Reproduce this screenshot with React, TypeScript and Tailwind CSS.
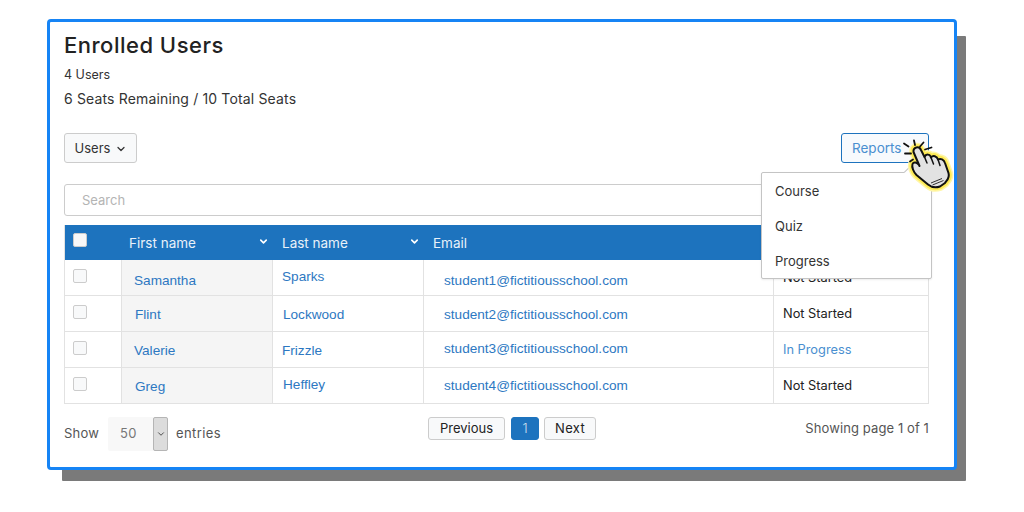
import * as React from "react";
import { ChevronDown } from "lucide-react";

const rows = [
  { first: "Samantha", last: "Sparks", email: "student1@fictitiousschool.com", status: "Not Started", firstPad: "pl-[12px] pt-[8px]", lastPad: "pl-[9px] pb-[1px]", emailPad: "pt-[7px]" },
  { first: "Flint", last: "Lockwood", email: "student2@fictitiousschool.com", status: "Not Started", firstPad: "pl-[13px] pt-[4px]", lastPad: "pl-[10px] pt-[4px]", emailPad: "pt-[4px]" },
  { first: "Valerie", last: "Frizzle", email: "student3@fictitiousschool.com", status: "In Progress", firstPad: "pl-[12px] pt-[4px]", lastPad: "pl-[9px] pt-[4px]", emailPad: "" },
  { first: "Greg", last: "Heffley", email: "student4@fictitiousschool.com", status: "Not Started", firstPad: "pl-[13px] pt-[4px]", lastPad: "pl-[10px] pb-[1px]", emailPad: "pt-[1px]" },
];

const handOutline =
  "M23.500 22 C23 17 29 15.500 31 20 L34.500 27 C36 23.500 40 24 41 27.500 C43 25 47 26 48 29.500 C50.500 28 54 29.500 55 33 L58.500 43 C60 48 57 50 55 53 L50 56.500 C45.500 58 41 57 38 54.500 L26.500 45 C23.500 42 21.500 37 22.500 34 C23.500 31.500 27 32 29 35 L29.500 36 Z";

const HandCursor = () => (
  <svg className="absolute left-[840px] top-[108px] pointer-events-none" width="70" height="65" viewBox="0 0 70 65">
    <path d={handOutline} fill="#fff6a8" stroke="#fff6a8" strokeWidth="9" strokeLinejoin="round" />
    <path d={handOutline} fill="#fdf07a" stroke="#fdea55" strokeWidth="6" strokeLinejoin="round" />
    <g stroke="#111" strokeWidth="1.800" strokeLinecap="round">
      <path d="M14 13.500 L18.500 16.500" />
      <path d="M24 10.500 L25 15" />
      <path d="M33.500 12.500 L30 16.500" />
      <path d="M35 19.500 L41.500 17.500" />
      <path d="M15 23.500 L21 23.500" />
      <path d="M20 31.500 L23 29.500" />
    </g>
    <path d={handOutline} fill="#e2e2e2" stroke="#111" strokeWidth="2" strokeLinejoin="round" />
    <path d="M34.500 27 L37 33 M41 27.500 L43.500 34 M48 29.500 L50 35.500" stroke="#111" strokeWidth="1.500" strokeLinecap="round" fill="none" />
    <path d="M41 53 L52 48.500 M42.500 55 L53.500 50.500" stroke="#333" strokeWidth="1" fill="none" />
  </svg>
);

export default function App() {
  return (
    <div className="h-[512px] w-[1024px] overflow-hidden bg-white pl-[47px] pt-[19px] font-['Inter',sans-serif] text-[#333]">
      <div className="relative h-[451px] w-[910px] rounded-[4px] border-[3px] border-[#1684f5] bg-white pr-[15px] pl-[14px] pt-[9px] shadow-[12px_14px_0_-3px_#7a7a7a]">
        <h2 className="text-[22px] leading-[28px] font-medium tracking-[0.5px] text-[#222]">Enrolled Users</h2>
        <p className="mt-[7px] text-[12.500px] leading-[18px]">4 Users</p>
        <p className="mt-[6px] text-[14px] leading-[18px] tracking-[0.15px]">6 Seats Remaining / 10 Total Seats</p>

        <div className="mt-[25px] flex items-start justify-between pr-[10px]">
          <button className="flex h-[30px] w-[73px] items-center justify-center gap-[5px] rounded-[3px] border border-[#ccc] bg-[#f8f9fa] pt-[1px] pl-[1px] text-[13px]">
            Users
            <ChevronDown size={12} strokeWidth={2.5} />
          </button>
          <button className="h-[30px] w-[88px] rounded-[3px] border border-[#1d73be] bg-[#f7fafd] pt-[1px] pl-[10px] text-left text-[13.500px] text-[#4a8fd0]">
            Reports
          </button>
        </div>

        <div className="mt-[21px] mr-[10px] flex h-[32px] items-center rounded-[3px] border border-[#ccc] pt-[1px] pl-[17px] text-[13px] text-[#b4b4b4]">
          Search
        </div>

        <div className="mt-[9px] mr-[10px] border border-t-0 border-[#e2e2e2]">
          <div className="grid h-[35px] grid-cols-[56px_151px_151px_350px_1fr] items-center bg-[#1d73be] pt-[1px] text-[13.500px] text-[#e9f1f9]">
            <div className="pb-[6px] pl-[8px]">
              <div className="h-[14px] w-[14px] rounded-[2px] border border-[#ccc] bg-[#f8f8f8]" />
            </div>
            <div className="flex items-center justify-between pr-[3px] pl-[8px]">
              First name
              <ChevronDown size={11} strokeWidth={3.5} className="mb-[3px] text-white" />
            </div>
            <div className="flex items-center justify-between pr-[3px] pl-[10px]">
              Last name
              <ChevronDown size={11} strokeWidth={3.5} className="mb-[3px] text-white" />
            </div>
            <div className="pl-[10px]">Email</div>
            <div />
          </div>
          {rows.map((row, i) => (
            <div
              key={i}
              className={`grid grid-cols-[56px_151px_151px_350px_1fr] font-['Liberation_Sans',sans-serif] text-[13.600px] text-[#2d78c2] ${i === 0 ? "h-[35px]" : "h-[36px] border-t border-[#e2e2e2]"}`}
            >
              <div className="flex items-center pb-[4px] pl-[8px]">
                <div className="h-[14px] w-[14px] rounded-[2px] border border-[#ccc] bg-[#f8f9fa]" />
              </div>
              <div className={`flex items-center border-l border-[#e2e2e2] bg-[#f5f5f5] ${row.firstPad}`}>{row.first}</div>
              <div className={`flex items-center border-l border-[#e2e2e2] ${row.lastPad}`}>{row.last}</div>
              <div className={`flex items-center border-l border-[#e2e2e2] pl-[20px] ${row.emailPad}`}>{row.email}</div>
              <div
                className={`flex items-center border-l border-[#e2e2e2] pl-[9px] font-['Inter',sans-serif] text-[12.800px] ${row.status === "In Progress" ? "text-[#4a8fd0]" : "text-[#222]"}`}
              >
                {row.status}
              </div>
            </div>
          ))}
        </div>

        <div className="mt-[13px] mr-[10px] grid grid-cols-[364px_1fr_auto] items-start">
          <div className="flex items-center text-[13px] tracking-[0.2px] text-[#555]">
            <span>Show</span>
            <div className="ml-[9px] flex h-[34px] w-[60px] rounded-[2px] bg-[#f8f8f8]">
              <span className="flex flex-1 items-center pl-[12px] text-[#777]">50</span>
              <span className="flex w-[15px] items-center justify-center rounded-[2px] border border-[#b5b5b5] bg-[#dcdcdc]">
                <ChevronDown size={10} strokeWidth={2} className="text-[#333]" />
              </span>
            </div>
            <span className="ml-[8px] tracking-[0.4px]">entries</span>
          </div>
          <div className="flex gap-[5px] text-[13px] text-[#222]">
            <button className="h-[23px] w-[77px] rounded-[3px] border border-[#ccc] bg-[#f8f9fa]">Previous</button>
            <button className="ml-[1px] h-[23px] w-[28px] rounded-[3px] border border-[#1d73be] bg-[#1d73be] font-light text-[#cfe0f0]">1</button>
            <button className="h-[23px] w-[52px] rounded-[3px] border border-[#ccc] bg-[#f8f9fa] tracking-[0.3px]">Next</button>
          </div>
          <div className="pt-[1px] text-[13px] leading-[20px] tracking-[0.1px] text-[#555]">Showing page 1 of 1</div>
        </div>

        {/* reports dropdown */}
        <div className="absolute top-[150px] left-[711px] h-[107px] w-[171px] rounded-[2px] border border-[#c4c4c4] bg-white pt-[1px] text-[13px] text-[#333] shadow-[0_1px_2px_rgba(0,0,0,0.08)]">
          <div className="absolute -top-[6px] left-[144px] h-[10px] w-[10px] rotate-45 border-t border-l border-[#c4c4c4] bg-white" />
          <div className="relative flex h-[35px] items-center pl-[13px]">Course</div>
          <div className="relative flex h-[35px] items-center pl-[13px]">Quiz</div>
          <div className="relative flex h-[35px] items-center pl-[13px]">Progress</div>
        </div>
        <HandCursor />
      </div>
    </div>
  );
}
